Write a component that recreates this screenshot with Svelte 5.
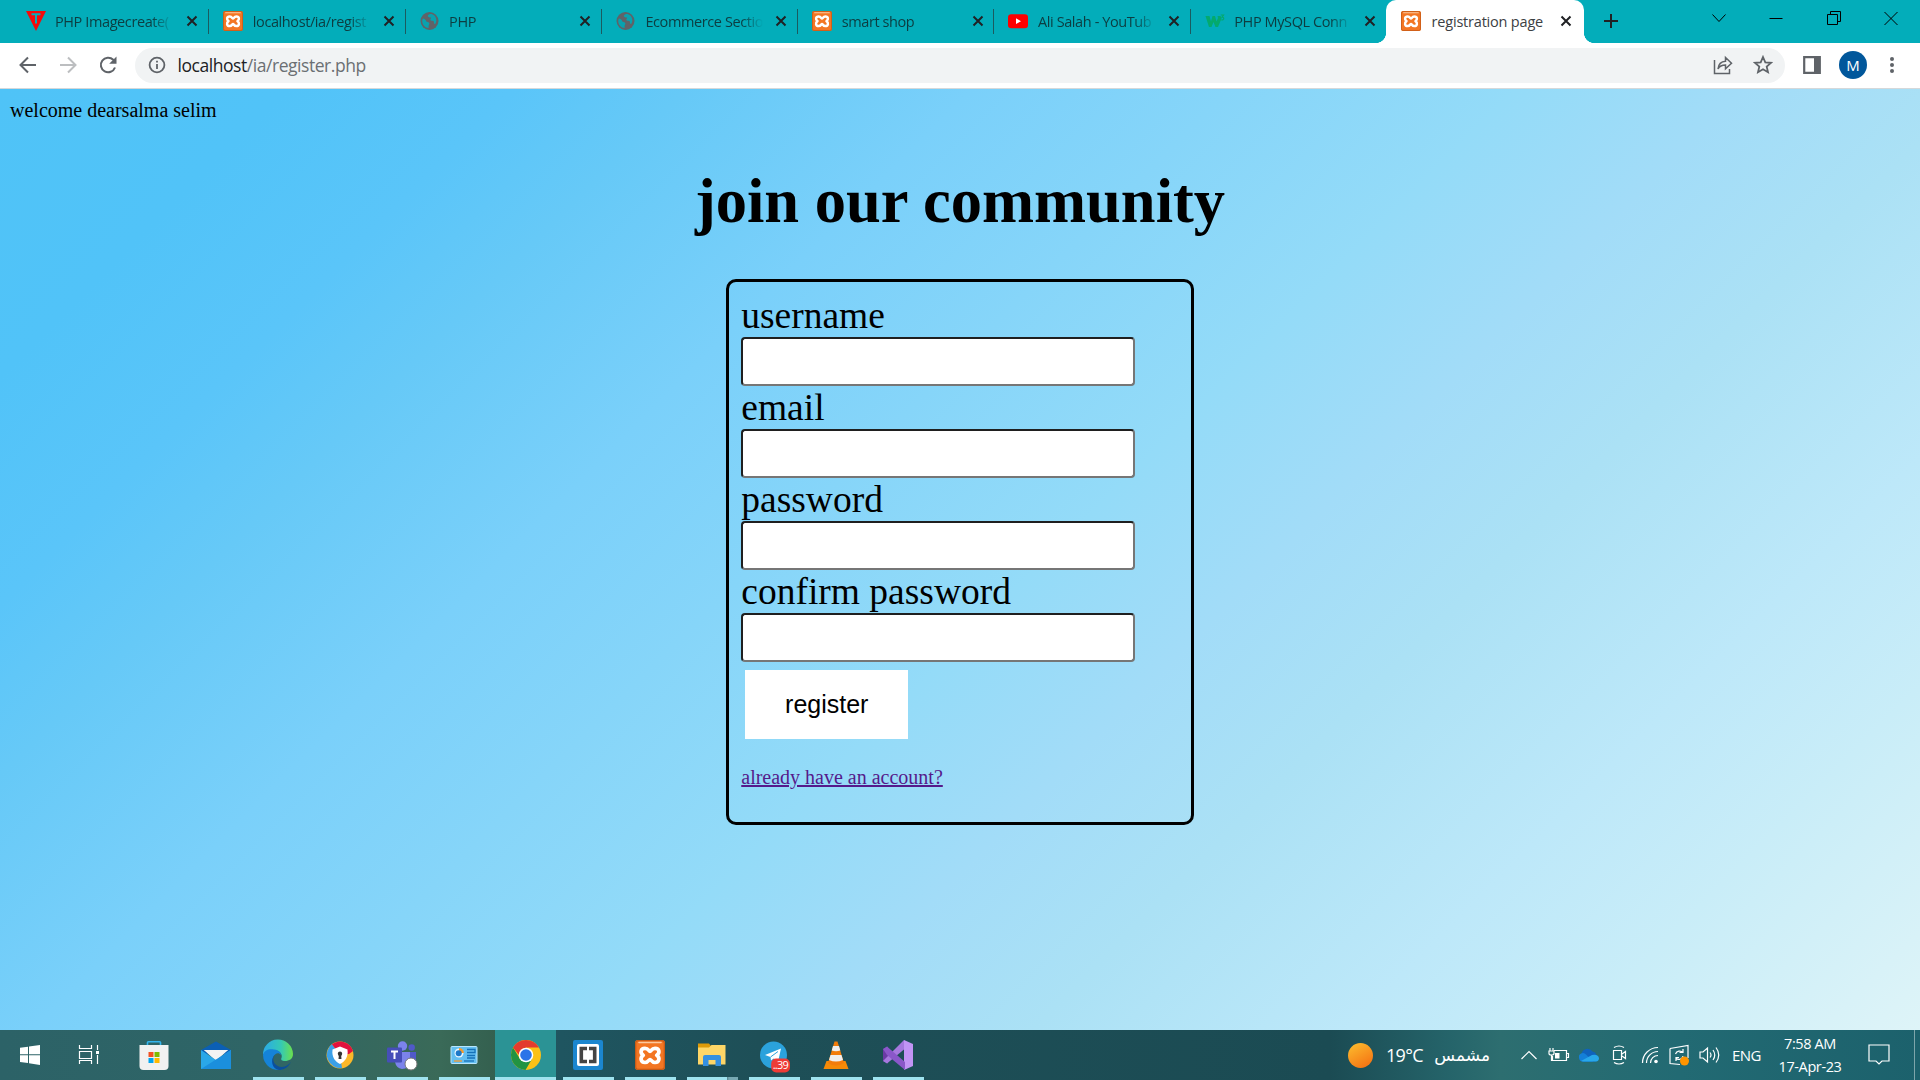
<script>
  const tabs = [
    { title: 'PHP Imagecreate(', icon: 't' },
    { title: 'localhost/ia/regist', icon: 'xampp' },
    { title: 'PHP', icon: 'globe' },
    { title: 'Ecommerce Sectio', icon: 'globe' },
    { title: 'smart shop', icon: 'xampp' },
    { title: 'Ali Salah - YouTub', icon: 'yt' },
    { title: 'PHP MySQL Conn', icon: 'w3' },
    { title: 'registration page', icon: 'xampp', active: true }
  ];
  const fields = ['username', 'email', 'password', 'confirm password'];
  const apps = [
    { id: 'start' }, { id: 'view' }, { id: 'store' }, { id: 'mail' },
    { id: 'edge', run: true }, { id: 'avg', run: true }, { id: 'teams', run: true },
    { id: 'panel', run: true }, { id: 'chrome', run: true, active: true },
    { id: 'brackets', run: true }, { id: 'xampp', run: true }, { id: 'folder', run: true, multi: true },
    { id: 'telegram', run: true }, { id: 'vlc', run: true }, { id: 'vs', run: true }
  ];
</script>

{#snippet xampp()}
  <rect x="0" y="0" width="30" height="30" rx="3" fill="#f37623" />
  <rect x=".7" y=".7" width="28.6" height="28.6" rx="2.5" fill="none" stroke="#c65a17" stroke-width="1.2" />
  <path d="M4 2.5H26" stroke="#fbc9a0" stroke-width="1.6" stroke-linecap="round" />
  <path d="M15 11.300C13.800 11.300 13.500 8.300 10 8.300C5.500 8.300 4.800 13 8.300 15.200C4.800 17.500 5.500 22.500 10 22.500C13.500 22.500 13.800 19.500 15 19.500C16.200 19.500 16.500 22.500 20 22.500C24.500 22.500 25.200 17.500 21.700 15.200C25.200 13 24.500 8.300 20 8.300C16.500 8.300 16.200 11.300 15 11.300Z" fill="#f37623" stroke="#fff" stroke-width="3.700" stroke-linejoin="round" />
  <path d="M10.300 11.800V13M19.700 11.800V13M10.300 18V19M19.700 18V19" stroke="#f37623" stroke-width="2" />
{/snippet}

{#snippet favicon(kind)}
  {#if kind === 't'}
    <svg class="fav" viewBox="0 0 20 20"><path d="M0 0H20L10 20Z" fill="#f40a0a" /><path d="M5.500 3.300H14.500M10 3.300V12.500" stroke="#03adba" stroke-width="2" /></svg>
  {:else if kind === 'xampp'}
    <svg class="fav" viewBox="0 0 30 30">{@render xampp()}</svg>
  {:else if kind === 'globe'}
    <svg class="fav" viewBox="0 0 20 20"><circle cx="9.500" cy="10" r="9" fill="#5f6368" /><path d="M2.800 7.500c2 .4 3 1.200 3.200 2.300s1.400 1 2.400 1.400 1.300 1.300.7 2.200-.6 1.800-.4 3.700c-3.700-.3-6.500-3.400-6.500-7.100 0-.9.200-1.700.6-2.500zM8 4.300c1-1.200 2.300-1.500 3.700-1.300 2 .6 3.700 2.300 4.300 4.300.7 2.200.2 4.200-.9 6-.9-.4-1.200-1.200-1.200-2.300 0-1.300-1-1.200-2.300-1.300s-1.600-1.300-.8-2.300 0-1-.9-.9S7.200 5.400 8 4.300z" fill="#08a2af" /></svg>
  {:else if kind === 'yt'}
    <svg class="fav" viewBox="0 0 20 20"><rect y="3.200" width="20" height="14" rx="3.300" fill="#f00" /><path d="M8 7.300L13 10.200L8 13.100Z" fill="#fff" /></svg>
  {:else}
    <svg class="fav" viewBox="0 0 20 20"><path d="M.5 5H4.500L6 10.500L7.500 5H10L11.500 10.500L13 7L12.500 5H15.500L16.500 7.500L13 16H10.500L8.500 11L6.500 16H4Z" fill="#04aa6d" /><path d="M15.800 4H18.500L17 6.200C19.600 6.200 19.200 9.500 16.300 8.800" fill="none" stroke="#04aa6d" stroke-width="1.200" /></svg>
  {/if}
{/snippet}

{#snippet appIcon(id)}
  <svg class="app-icon" viewBox="0 0 30 30">
    {#if id === 'start'}
      <path d="M5 7.800L13 6.700V14.300H5ZM14 6.500L25 5V14.300H14ZM5 15.300H13V23L5 21.900ZM14 15.300H25V25L14 23.300Z" fill="#fff" />
    {:else if id === 'view'}
      <path d="M3.500 5V8.500H15.500V5M3.500 24V20.500H15.500V24M3.500 11.500H15.500V18.500H3.500ZM21.500 5V10M21.500 15V24" fill="none" stroke="#fff" stroke-width="1.200" /><rect x="20" y="11" width="3" height="3" fill="#fff" />
    {:else if id === 'store'}
      <path d="M8.500 7V2.500Q8.500 1.700 9.300 1.700H20.700Q21.500 1.700 21.500 2.500V7" fill="none" stroke="#35b5ee" stroke-width="1.600" />
      <path d="M.5 5H29.500V26Q29.500 30 25.500 30H4.500Q.5 30 .5 26Z" fill="#f1f1f1" />
      <path d="M9.500 12h5v5h-5z" fill="#f25022" /><path d="M15.500 12h5v5h-5z" fill="#7fba00" /><path d="M9.500 18h5v5h-5z" fill="#00a4ef" /><path d="M15.500 18h5v5h-5z" fill="#ffb900" />
    {:else if id === 'mail'}
      <path d="M0 10L15 1.500L30 10V14H0Z" fill="#0b5fb4" /><path d="M3 10H27L15 21Z" fill="#f3f3f3" /><path d="M0 10L15 20L30 10V29H0Z" fill="#2aa7e8" /><path d="M3 10H27L15 18.500Z" fill="#f3f3f3" /><path d="M0 29L30 10V29Z" fill="#1b8fdd" />
    {:else if id === 'edge'}
      <defs>
        <linearGradient id="eg"><stop offset="0" stop-color="#2aa9e8" /><stop offset=".6" stop-color="#35c9b4" /><stop offset="1" stop-color="#6be04c" /></linearGradient>
      </defs>
      <path d="M0 15A15 15 0 0 1 30 14C30 19 26 21 22 21C19 21 17.500 19.700 18.500 18C20 14 16 10 11 10C5 10 1 13 0 15Z" fill="url(#eg)" />
      <path d="M0 15C1 10 6 8.500 11 9.500C16 10 18 13 18 15C14 10 7 17 11 24C13 28 17 30 20 29A15 15 0 0 1 0 15Z" fill="#1583d8" />
      <path d="M11.500 15C8 20 12 27 19 27C23 27 26 24 28 22C25 28 20 30 16 30C9 29 7 20 11.500 15Z" fill="#0b4f9c" />
    {:else if id === 'avg'}
      <circle cx="15" cy="15" r="13.500" fill="#fbb829" /><path d="M15 15L17 28A13.500 13.500 0 0 1 7 4Z" fill="#3ba0e8" /><path d="M15 15L7 4.200A13.500 13.500 0 0 1 28 11L24 14Z" fill="#e3123d" />
      <path d="M15 6.500L22.500 9.500C23.500 17 20 21.500 15 24C10 21.500 6.500 17 7.500 9.500Z" fill="#fff" /><circle cx="15" cy="13.700" r="2.200" fill="#333" /><path d="M14 14H16L16.500 19H13.500Z" fill="#333" />
    {:else if id === 'teams'}
      <circle cx="15.500" cy="6" r="4.700" fill="#7b83eb" /><circle cx="24.700" cy="7.500" r="3.200" fill="#5059c9" /><path d="M20 12H29V21Q28 25 22 25Z" fill="#5059c9" /><path d="M8 12H23V22Q22 29 15 29Q9 28 8 22Z" fill="#7b83eb" />
      <rect y="7.500" width="15" height="15" rx="1" fill="#464eb8" /><path d="M4 11.500H11M7.500 11.500V19" stroke="#fff" stroke-width="2" />
      <circle cx="24" cy="24" r="6" fill="#fff" stroke="#777" />
    {:else if id === 'panel'}
      <rect x="2" y="6.500" width="26" height="17" rx="1" fill="#64bff0" stroke="#b9e6fc" stroke-width="1" /><circle cx="10" cy="13" r="4.500" fill="#e8f6ff" /><path d="M10 13V8A5 5 0 0 1 15 13Z" fill="#f49b2c" /><circle cx="9.700" cy="13.300" r="3" fill="#1d78c8" /><path d="M18 9.500H26V12.500H18M18 15.500H26M18 18H26" fill="none" stroke="#1672b8" stroke-width="1.300" /><path d="M5 21H13" stroke="#f49b2c" stroke-width="1.300" /><path d="M15 21H25" stroke="#1672b8" stroke-width="1.300" />
    {:else if id === 'chrome'}
      <circle cx="15" cy="15" r="15" fill="#fbc116" /><path d="M2 7.500L9 19L15 22L21.300 18.500L14.500 30A15 15 0 0 1 2 7.500Z" fill="#229342" /><path d="M2 7.500A15 15 0 0 1 28 7.500H15L8 15Z" fill="#e33b2e" /><circle cx="15" cy="15" r="7.300" fill="#fff" /><circle cx="15" cy="15" r="5.800" fill="#2a74e8" />
    {:else if id === 'brackets'}
      <rect width="30" height="30" rx="2" fill="#1b86cf" /><rect x="4" y="4" width="22" height="22" rx="2" fill="#fff" /><path d="M14 8.500H8.300V21.500H14M16 8.500H21.700V21.500H16" fill="none" stroke="#444" stroke-width="3.600" />
    {:else if id === 'xampp'}
      {@render xampp()}
    {:else if id === 'folder'}
      <path d="M1 3.500H12L14 6H27V12H1Z" fill="#dd9a09" /><path d="M1 7.500H12L14.500 5H28.500V24.500H1Z" fill="#fed667" /><path d="M6 26V17Q6 15 8 15H22Q24 15 24 17V26H18.500V20H11.500V26Z" fill="#3590e0" />
    {:else if id === 'telegram'}
      <circle cx="14.500" cy="15" r="13.500" fill="#2ba2dc" /><path d="M6 15L22 8.500L19 22L14.500 18.500L12 20.500L11.500 17Z" fill="#fff" /><path d="M11.500 17L19 11.500" stroke="#2ba2dc" />
      <rect x="12.200" y="18.500" width="18.800" height="14" rx="5" fill="#ee3b36" /><text x="13.700" y="29.300" font-size="11" textLength="16" fill="#fff" font-family="Open Sans, sans-serif">..39</text>
    {:else if id === 'vlc'}
      <path d="M5.500 21H24.500L27.500 29H2.500Z" fill="#f58a07" /><path d="M13.500 1.500H16.500L23 23Q15 28 7 23Z" fill="#f27c0a" /><path d="M12 6H18L19.300 10.500Q15 12 10.700 10.500ZM9.500 15H20.500L22 20Q15 23 8 20Z" fill="#eee" />
    {:else}
      <path d="M0 9L5 6.500V23.500L0 21Z" fill="#6a3aa5" /><path d="M0 21L21 0L24 7L4 23.500Z" fill="#a678de" /><path d="M21 0L30 4V26L21 30Z" fill="#c294f5" /><path d="M0 9L4 6.500L22 22V30L4 15Z" fill="#8a57c9" />
    {/if}
  </svg>
{/snippet}

<div class="screen">
  <header class="strip">
    {#each tabs as t}
      <div class="tab" class:active={t.active}>
        {@render favicon(t.icon)}
        <span class="title">{t.title}</span>
        <svg class="x" viewBox="0 0 12 12"><path d="M1.500 1.500L10.500 10.500M10.500 1.500L1.500 10.500" /></svg>
      </div>
    {/each}
    <svg class="plus" viewBox="0 0 16 16"><path d="M8 1V15M1 8H15" /></svg>
    <div class="win">
      <svg viewBox="0 0 16 16"><path d="M1.500 4.500L8 11.500L14.500 4.500" /></svg>
      <svg viewBox="0 0 16 16"><path d="M1.500 8.500H14.500" /></svg>
      <svg viewBox="0 0 16 16"><path d="M1.500 4.500H11.500V14.500H1.500ZM4.500 4.500V1.500H14.500V11.500H11.500" /></svg>
      <svg viewBox="0 0 16 16"><path d="M1.500 2L14.500 15M14.500 2L1.500 15" /></svg>
    </div>
  </header>

  <nav class="toolbar">
    <svg class="nav" viewBox="0 0 20 20"><path d="M18 10H3M10 2.500L2.500 10L10 17.500" /></svg>
    <svg class="nav off" viewBox="0 0 20 20"><path d="M2 10H17M10 2.500L17.500 10L10 17.500" /></svg>
    <svg class="nav" viewBox="0 0 20 20"><path d="M17 12.500A7.300 7.300 0 1 1 15.300 4.800L17 6.500" /><path class="solid" d="M18.500 1.500V8.800H11.200Z" /></svg>
    <div class="omni">
      <svg class="info" viewBox="0 0 18 18"><circle cx="9" cy="9" r="7.400" /><path d="M9 8V13M9 4.800V6.600" /></svg>
      <span class="url">localhost<i>/ia/register.php</i></span>
      <svg class="oi" viewBox="0 0 20 20"><path d="M1.500 5V18.500H16.500V14" /><path d="M5 14C5.500 9 8 6.500 12.500 6.300V2.500L18.500 8.200L12.500 13.800V10C9 10 6.500 11 5 14Z" /></svg>
      <svg class="oi star" viewBox="0 0 20 20"><path d="M10 2L12.300 7.300L18 7.800L13.700 11.600L15 17.200L10 14.200L5 17.200L6.300 11.600L2 7.800L7.700 7.300Z" /></svg>
    </div>
    <svg class="side" viewBox="0 0 18 18"><path d="M1.200 1.200H16.800V16.800H1.200Z" /><path class="solid" d="M11 1H17V17H11Z" /></svg>
    <span class="avatar">M</span>
    <svg class="dots" viewBox="0 0 6 20"><circle cx="3" cy="4" r="2" /><circle cx="3" cy="10" r="2" /><circle cx="3" cy="16" r="2" /></svg>
  </nav>

  <main>
    <p class="welcome">welcome dearsalma selim</p>
    <h1>join our community</h1>
    <form>
      {#each fields as f}
        <label for={f}>{f}</label>
        <input id={f} type="text" />
      {/each}
      <button type="button">register</button>
      <a href="#login">already have an account?</a>
    </form>
  </main>

  <footer>
    {#each apps as a}
      <div class="app" class:run={a.run} class:on={a.active} class:multi={a.multi}>{@render appIcon(a.id)}</div>
    {/each}
    <div class="tray">
      <span class="sun"></span>
      <span class="temp">19°C</span>
      <span class="arabic" dir="rtl">مشمس</span>
      <svg class="chev" viewBox="0 0 18 18"><path d="M1.500 13L9 5.500L16.500 13" /></svg>
      <svg class="bat" viewBox="0 0 22 20"><path d="M6 5.500H18.500V15.500H4.500V11M18.500 8.500H20.500V12.500H18.500M1 6H6V8.500Q6 10 3.500 10Q1 10 1 8.500ZM2 3V6M5 3V6M3.500 10V15.500H5" /><path class="fill" d="M7 8H11.500V13.500H7Z" /></svg>
      <svg class="cloud" viewBox="0 0 20 16"><path d="M4 14.500A4 4 0 0 1 2.500 7A6 6 0 0 1 13.500 4.500A5 5 0 0 1 17.500 8A3.500 3.500 0 0 1 17 14.500Z" /><path d="M0 11A4 4 0 0 1 7 7.500L14 14.500H4Q.5 14.500 0 11Z" /><path d="M2 14L13 8Q19.500 7 20 11.500Q19.500 14.500 17 14.500H4Z" /></svg>
      <svg class="meet" viewBox="0 0 16 20"><path d="M1.500 5.500H9.500V14.500H1.500ZM10 9L13.500 6.500V13.500L10 11M2 2.500Q7 -.5 12 2.500M2 17.500Q7 20.500 12 17.500" /></svg>
      <svg class="wifi" viewBox="0 0 18 18"><path d="M1.500 17A15.500 15.500 0 0 1 17 1.500M5.500 17A11.500 11.500 0 0 1 17 5.500M9.500 17A7.500 7.500 0 0 1 17 9.500" /><circle cx="15" cy="15.500" r="1.800" class="fill" /></svg>
      <svg class="upd" viewBox="0 0 20 22"><path d="M1 4.500L19 1.500V14M1 4.500V19.500L11 20.500M6.500 10A4.500 4.500 0 0 1 14 8.500M14 5V8.500H10.500M14 12A4 4 0 0 1 7 14M7 17V13.500H10" /><circle cx="15.500" cy="17" r="4.500" fill="#ff9500" stroke="none" /></svg>
      <svg class="vol" viewBox="0 0 21 18"><path d="M1 6H4L8.500 2V16L4 12H1ZM11 6.500Q13 9 11 11.500M14 4Q17.500 9 14 14M17 1.500Q22.500 9 17 16.500" /></svg>
      <span class="lang">ENG</span>
      <span class="clock"><span>7:58 AM</span><span>17-Apr-23</span></span>
      <svg class="note" viewBox="0 0 22 22"><path d="M1 1H21V17H14L11 20L8 17H1Z" /></svg>
      <span class="edge"></span>
    </div>
  </footer>
</div>

<style>
  :global(body) { margin: 0; overflow: hidden; }
  .screen { width: 1920px; height: 1080px; display: flex; flex-direction: column; font-family: 'Open Sans', 'Noto Sans', sans-serif; }
  svg { flex: none; display: block; }

  .strip { height: 43px; background: #03adba; display: flex; padding-left: 12px; box-sizing: border-box; flex: none; }
  .tab { width: 196.300px; height: 43px; box-sizing: border-box; position: relative; display: flex; align-items: center; padding: 0 0 1px 15px; flex: none; color: #0d3d41; }
  .tab:first-child { padding-left: 13.500px; }
  .tab:first-child .x { margin-left: 13px; }
  .tab::after { content: ''; position: absolute; right: -1px; top: 9px; width: 1px; height: 25px; background: #1b5b60; }
  .tab:nth-child(7)::after, .tab.active::after { display: none; }
  .fav { width: 20px; height: 20px; }
  .title { width: 118px; flex: none; margin-left: 9.500px; font-size: 14.500px; letter-spacing: -.4px; white-space: nowrap; overflow: hidden; -webkit-mask-image: linear-gradient(90deg, #000 82%, transparent 100%); }
  .tab.active .title { -webkit-mask-image: none; color: #3c4043; letter-spacing: -.2px; margin-left: 10.500px; }
  .x { width: 12px; height: 12px; margin-left: 12px; }
  .tab.active .x { margin-left: 10.500px; }
  .x path { stroke: #202124; stroke-width: 2; }
  .tab.active { background: #fff; border-radius: 10px 10px 0 0; width: 198px; }
  .tab.active::before { content: ''; position: absolute; left: -10px; right: -10px; bottom: 0; height: 10px; background: radial-gradient(circle at 0 0, transparent 9.700px, #fff 10.200px) left / 10px 10px no-repeat, radial-gradient(circle at 100% 0, transparent 9.700px, #fff 10.200px) right / 10px 10px no-repeat; }
  .plus { width: 16px; height: 16px; margin: 13px 0 0 19px; }
  .plus path { stroke: #202124; stroke-width: 2; }
  .win { margin: 10px 21px 0 auto; display: flex; gap: 41.300px; height: 16px; }
  .win svg { width: 16px; height: 16px; }
  .win path { fill: none; stroke: #000; stroke-width: 1; }

  .toolbar { height: 46px; flex: none; box-sizing: border-box; background: #fff; border-bottom: 1px solid #d5d8da; display: flex; align-items: center; padding: 0 0 1px 18px; }
  .nav { width: 20px; height: 20px; margin-right: 20px; }
  .nav path { fill: none; stroke: #5f6368; stroke-width: 2; }
  .nav.off path { stroke: #bcbec0; }
  .nav .solid, .side .solid { fill: #5f6368; stroke: none; }
  .omni { width: 1650px; height: 35px; margin-left: -3px; border-radius: 18px; background: #f1f3f4; display: flex; align-items: center; box-sizing: border-box; padding: 0 12.500px 0 13px; }
  .info { width: 18px; height: 18px; }
  .info circle, .info path { fill: none; stroke: #5f6368; stroke-width: 1.800; }
  .url { margin-left: 11.500px; flex: 1; font-size: 17.500px; letter-spacing: -.45px; color: #202124; }
  .url i { font-style: normal; color: #6b6f73; }
  .oi { width: 20px; height: 20px; margin-left: 20px; }
  .oi path { fill: none; stroke: #5f6368; stroke-width: 1.500; }
  .star path { stroke-width: 1.800; }
  .side { width: 18px; height: 18px; margin-left: 18px; }
  .side path { fill: none; stroke: #5f6368; stroke-width: 2.200; }
  .avatar { width: 28px; height: 28px; margin-left: 18px; border-radius: 50%; background: #01579b; color: #fff; font-size: 15px; line-height: 28px; text-align: center; }
  .dots { width: 6px; height: 20px; margin-left: 22px; fill: #5f6368; }

  main { flex: 1; min-height: 0; box-sizing: border-box; padding: 10px; font-family: 'Liberation Serif', serif; color: #000; display: flex; flex-direction: column; align-items: center; background: linear-gradient(135deg, #4fc3f7 0%, #51c3f8 10%, #5ac5f9 18%, #66c9f7 24%, #7ad0fa 34%, #86d5f9 43%, #94dbf8 53%, #a2dcf8 61%, #abe1f5 69%, #bde8f9 80%, #c9edf8 88%, #def4f8 100%); }
  .welcome { align-self: flex-start; margin: 0; font-size: 20px; line-height: 23px; }
  h1 { margin: 43px 0 0; font-size: 62.500px; line-height: 72px; height: 72px; white-space: nowrap; }
  form { margin-top: 42px; width: 467.500px; height: 546px; box-sizing: border-box; border: 3px solid #000; border-radius: 10px; padding: 12px; display: flex; flex-direction: column; align-items: flex-start; }
  label { font-size: 37.500px; line-height: 43px; height: 43px; }
  input { width: 394px; height: 49px; box-sizing: border-box; background: #fff; border: 2px solid; border-color: #1f1f1f #767676 #767676 #1f1f1f; border-radius: 4px; padding: 0; outline: none; }
  button { margin: 8px 0 0 4px; width: 163px; height: 69px; border: 0; border-radius: 0; padding: 0; background: #fff; color: #000; font: 25px 'Liberation Sans', sans-serif; }
  a { margin-top: 27px; font-size: 20px; line-height: 23px; color: #551a8b; }

  footer { height: 50px; flex: none; display: flex; background: linear-gradient(90deg, #2c6267 0, #2f6566 260px, #3a6a58 440px, #34604f 495px, #1f5560 560px, #1e4f57 760px, #1b4b53 1330px, #25646a 1450px, #2d6e70 1500px, #226a73 1680px, #1c616c 1920px); }
  .app { width: 62px; height: 50px; position: relative; display: flex; align-items: center; justify-content: center; flex: none; }
  .app:nth-child(2) { margin-right: 1px; }
  .app:nth-child(1) { width: 60px; }
  .app.on { width: 61px; }
  .app.on + .app { margin-left: 0; }
  .app:nth-child(2) { padding-left: 0; }
  .app-icon { width: 30px; height: 30px; overflow: visible; }
  .app.on { background: #2b9395; margin-right: 1px; }
  .app.run::after { content: ''; position: absolute; bottom: 0; left: 6px; right: 5px; height: 3px; background: #9fe3ef; }
  .app.on::after { left: 0; right: 0; }
  .app.multi::after { background: linear-gradient(90deg, #9fe3ef 40px, #527f88 40px, #77a9b3 42px); }
  .tray { margin-left: auto; display: flex; align-items: center; color: #fff; height: 50px; }
  .tray path { fill: none; stroke: #fff; stroke-width: 1.200; }
  .tray .cloud path { stroke: none; }
  .tray .cloud path:nth-child(1) { fill: #0f63bd; }
  .tray .cloud path:nth-child(2) { fill: #1480d8; }
  .tray .cloud path:nth-child(3) { fill: #28a8ea; }
  .tray .fill { fill: #fff; stroke: none; }
  .sun { width: 25px; height: 25px; border-radius: 50%; background: linear-gradient(150deg, #fcc02f, #f46a10); }
  .temp { margin-left: 13px; width: 37px; font-size: 18px; letter-spacing: -.7px; white-space: nowrap; }
  .arabic { margin-left: 11px; width: 56px; font-size: 17px; font-family: 'DejaVu Sans', sans-serif; white-space: nowrap; }
  .chev { width: 18px; height: 18px; margin-left: 30px; }
  .bat { width: 22px; height: 20px; margin-left: 10px; }
  .cloud { width: 20px; height: 16px; margin-left: 9px; }
  .meet { width: 16px; height: 20px; margin-left: 13px; }
  .wifi { width: 18px; height: 18px; margin-left: 13px; }
  .upd { width: 20px; height: 22px; margin-left: 10px; }
  .vol { width: 21px; height: 18px; margin-left: 10px; }
  .lang { margin-left: 12px; width: 30px; font-size: 15px; letter-spacing: -.6px; }
  .clock { margin-left: 10px; width: 76px; display: flex; flex-direction: column; align-items: center; font-size: 14.500px; line-height: 23px; letter-spacing: -.4px; white-space: nowrap; }
  .note { width: 22px; height: 22px; margin-left: 20px; }
  .edge { width: 1px; height: 50px; margin: 0 5px 0 24px; background: #7da5aa; }
</style>
